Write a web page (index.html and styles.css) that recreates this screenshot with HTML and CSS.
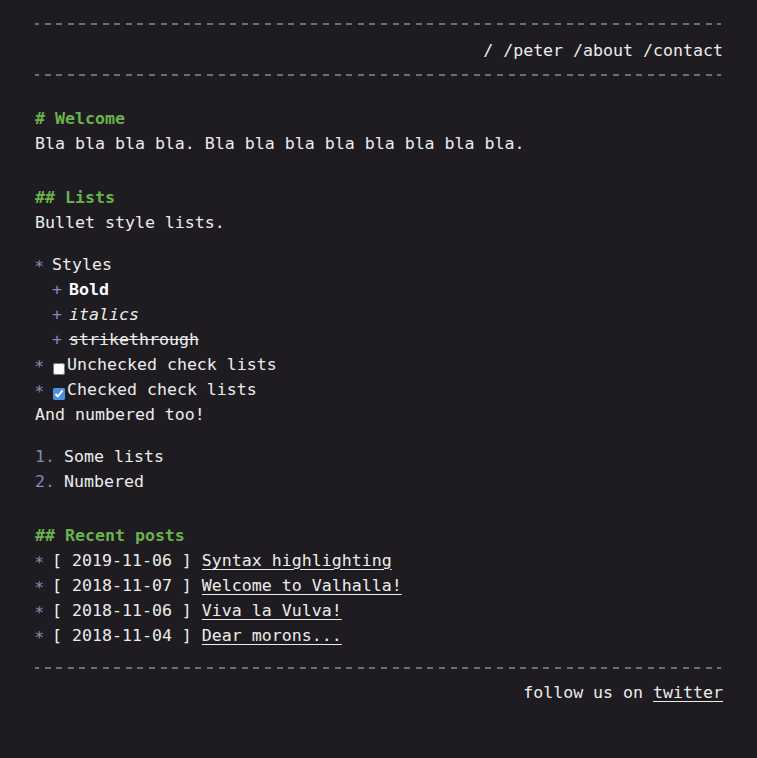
FILE: index.html
```html
<!DOCTYPE html>
<html lang="en">
<head>
<meta charset="utf-8">
<title>Valhalla</title>
<link rel="stylesheet" href="styles.css">
</head>
<body>
<div class="page">
  <header class="site-header">
    <nav class="nav">
      <a href="#">/</a> <a href="#">/peter</a> <a href="#">/about</a> <a href="#">/contact</a>
    </nav>
  </header>

  <main class="content">
    <h1 class="heading"># Welcome</h1>
    <p class="para">Bla bla bla bla. Bla bla bla bla bla bla bla bla.</p>

    <h2 class="heading section">## Lists</h2>
    <p class="para">Bullet style lists.</p>

    <ul class="list block-top">
      <li class="item">Styles
        <ul class="list sub">
          <li class="item plus"><strong>Bold</strong></li>
          <li class="item plus"><em>italics</em></li>
          <li class="item plus"><s>strikethrough</s></li>
        </ul>
      </li>
      <li class="item"><input class="check" type="checkbox">Unchecked check lists</li>
      <li class="item"><input class="check" type="checkbox" checked>Checked check lists</li>
    </ul>
    <p class="para">And numbered too!</p>

    <ol class="numbered">
      <li class="num-item">Some lists</li>
      <li class="num-item">Numbered</li>
    </ol>

    <h2 class="heading section">## Recent posts</h2>
    <ul class="list">
      <li class="item">[ 2019-11-06 ] <a class="link" href="#">Syntax highlighting</a></li>
      <li class="item">[ 2018-11-07 ] <a class="link" href="#">Welcome to Valhalla!</a></li>
      <li class="item">[ 2018-11-06 ] <a class="link" href="#">Viva la Vulva!</a></li>
      <li class="item">[ 2018-11-04 ] <a class="link" href="#">Dear morons...</a></li>
    </ul>
  </main>

  <footer class="site-footer">
    follow us on <a class="link" href="#">twitter</a>
  </footer>
</div>
</body>
</html>
```

FILE: styles.css
```css
html, body {
  margin: 0;
  padding: 0;
  background: #1e1c21;
}

body {
  color: #ececec;
  font-family: "DejaVu Sans Mono", "Liberation Mono", monospace;
  font-size: 16.6px;
  line-height: 25px;
}

.page {
  width: 688px;
  margin: 0 auto;
  padding-top: 23px;
  padding-left: 1px;
}

.site-header {
  background-image:
    repeating-linear-gradient(90deg, #6e6e6e 0 6px, transparent 6px 11.6px),
    repeating-linear-gradient(90deg, #6e6e6e 0 6px, transparent 6px 11.6px);
  background-size: 100% 2px, 100% 2px;
  background-position: -2px 0, -2px 100%;
  background-repeat: no-repeat;
  padding: 15px 0 13px;
  text-align: right;
}

.nav a {
  color: #ececec;
  text-decoration: none;
}

.content {
  padding-top: 30px;
}

.heading {
  margin: 0;
  font-size: 16.6px;
  line-height: 25px;
  font-weight: bold;
  color: #6ab34c;
}

.section {
  margin-top: 29px;
}

.para {
  margin: 0;
}

.list {
  list-style: none;
  margin: 0;
  padding: 0 0 0 17px;
}

.block-top {
  margin-top: 17px;
}

.list.sub {
  padding-left: 17px;
}

.item {
  position: relative;
}

.item::before {
  content: "\2217";
  position: absolute;
  left: -18px;
  top: -1px;
  color: #7f8db4;
}

.item.plus::before {
  content: "+";
  left: -17px;
  top: 0;
}

.item strong {
  font-weight: bold;
  color: #ffffff;
}

.item em {
  font-style: italic;
}

.check {
  width: 12px;
  height: 12px;
  margin: 0 2px 0 1px;
  vertical-align: -5px;
  accent-color: #4a8ee6;
}

.numbered {
  list-style: none;
  counter-reset: n;
  margin: 17px 0 0;
  padding: 0 0 0 29px;
}

.num-item {
  position: relative;
  counter-increment: n;
}

.num-item::before {
  content: counter(n) ".";
  position: absolute;
  left: -29px;
  color: #7f8db4;
}

.link {
  color: #ececec;
  text-decoration: underline;
  text-underline-offset: 3px;
}

.site-footer {
  margin-top: 19px;
  background-image: repeating-linear-gradient(90deg, #6e6e6e 0 6px, transparent 6px 11.6px);
  background-size: 100% 2px;
  background-position: -2px 0;
  background-repeat: no-repeat;
  padding-top: 13px;
  text-align: right;
}
```
